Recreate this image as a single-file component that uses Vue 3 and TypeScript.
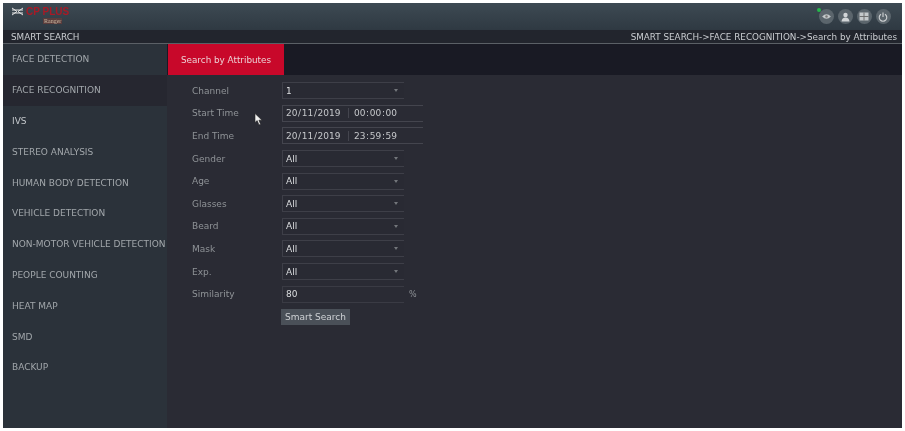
<template>
  <div class="frame">
    <header class="topbar">
      <div class="logo">
        <div class="logo-main">
          <svg class="logo-mark" width="13" height="9" viewBox="0 0 13 9">
            <path d="M1 1 L6 4.5 L1 8 M12 1 L7 4.5 L12 8 M1 3 H12 M1 6 H12" fill="none" stroke="#e4e4e4" stroke-width="1" />
          </svg>
          <span class="logo-text">CP PLUS</span>
        </div>
        <span class="logo-sub">Ranger</span>
      </div>
      <div class="top-icons">
        <span class="round-btn">
          <i class="online"></i>
          <svg width="9" height="7" viewBox="0 0 10 8"><path d="M0 4 Q5 -1 10 4 Q5 9 0 4 Z" fill="#c4c8ca" /><circle cx="5" cy="4" r="1.4" fill="#777" /></svg>
        </span>
        <span class="round-btn">
          <svg width="9" height="10" viewBox="0 0 9 10"><circle cx="4.5" cy="3" r="2.2" fill="#d2d5d7" /><path d="M0.5 9.5 Q1 5.5 4.5 5.5 Q8 5.5 8.5 9.5 Z" fill="#d2d5d7" /></svg>
        </span>
        <span class="round-btn">
          <svg width="10" height="9" viewBox="0 0 10 9"><rect x="0.5" y="0.5" width="9" height="8" fill="#c4c8ca" /><path d="M5 0.5 V8.5 M0.5 4.5 H9.5" stroke="#666" stroke-width="0.9" /></svg>
        </span>
        <span class="round-btn">
          <svg width="10" height="10" viewBox="0 0 10 10"><path d="M3 2.2 A3.8 3.8 0 1 0 7 2.2 M5 0.6 V5" fill="none" stroke="#d2d5d7" stroke-width="1.1" /></svg>
        </span>
      </div>
    </header>

    <div class="crumbs">
      <span>SMART SEARCH</span>
      <span>SMART SEARCH-&gt;FACE RECOGNITION-&gt;Search by Attributes</span>
    </div>

    <div class="body">
      <nav class="sidebar">
        <div v-for="item in menu" :key="item" class="menu-item" :class="{ active: item === 'FACE RECOGNITION', bright: item === 'IVS' }">
          {{ item }}
        </div>
      </nav>

      <main class="content">
        <div class="tabs">
          <div class="tab">Search by Attributes</div>
        </div>

        <div class="form">
          <template v-for="row in rows" :key="row.label">
            <label class="label">{{ row.label }}</label>
            <div v-if="row.kind === 'select'" class="select">
              <span>{{ row.value }}</span>
              <i class="caret"></i>
            </div>
            <div v-else-if="row.kind === 'time'" class="time-box">
              <span class="date">{{ row.value }}</span>
              <span class="time">{{ row.time }}</span>
            </div>
            <div v-else class="number-row">
              <div class="number">{{ row.value }}</div>
              <span class="unit">%</span>
            </div>
          </template>
          <span></span>
          <div><button class="search-btn" type="button">Smart Search</button></div>
        </div>

        <svg class="cursor" width="9" height="13" viewBox="0 0 9 13">
          <path d="M1 0.5 L1 9.5 L3.2 7.6 L5 12 L6.6 11.2 L4.9 7.2 L8 7.2 Z" fill="#f2f2f2" stroke="#222" stroke-width="0.6" />
        </svg>
      </main>
    </div>
  </div>
</template>

<script setup lang="ts">
interface Row {
  label: string
  kind: 'select' | 'time' | 'number'
  value: string
  time?: string
}

const menu: string[] = [
  'FACE DETECTION',
  'FACE RECOGNITION',
  'IVS',
  'STEREO ANALYSIS',
  'HUMAN BODY DETECTION',
  'VEHICLE DETECTION',
  'NON-MOTOR VEHICLE DETECTION',
  'PEOPLE COUNTING',
  'HEAT MAP',
  'SMD',
  'BACKUP',
]

const rows: Row[] = [
  { label: 'Channel', kind: 'select', value: '1' },
  { label: 'Start Time', kind: 'time', value: '20 / 11 / 2019', time: '00 : 00 : 00' },
  { label: 'End Time', kind: 'time', value: '20 / 11 / 2019', time: '23 : 59 : 59' },
  { label: 'Gender', kind: 'select', value: 'All' },
  { label: 'Age', kind: 'select', value: 'All' },
  { label: 'Glasses', kind: 'select', value: 'All' },
  { label: 'Beard', kind: 'select', value: 'All' },
  { label: 'Mask', kind: 'select', value: 'All' },
  { label: 'Exp.', kind: 'select', value: 'All' },
  { label: 'Similarity', kind: 'number', value: '80' },
]
</script>

<style>
html,
body {
  margin: 0;
  background: #fff;
}
</style>

<style scoped>
.frame {
  width: 899px;
  height: 425px;
  margin: 3px 0 0 3px;
  display: flex;
  flex-direction: column;
  overflow: hidden;
  background: #262730;
  font-family: "DejaVu Sans", sans-serif;
  font-size: 9px;
  color: #a9adb1;
  filter: blur(0.5px);
}

.topbar {
  height: 27px;
  flex: none;
  display: flex;
  justify-content: space-between;
  align-items: center;
  padding: 0 11.5px 0 8px;
  background: linear-gradient(#3d4a53, #2f3942);
}

.logo {
  display: flex;
  flex-direction: column;
  align-items: flex-start;
  padding-bottom: 3px;
}

.logo-main {
  display: flex;
  align-items: center;
  gap: 2px;
  height: 11px;
}

.logo-text {
  font-family: "Liberation Sans", sans-serif;
  font-weight: 700;
  font-size: 10px;
  line-height: 11px;
  color: #a81a26;
}

.logo-sub {
  margin: 1px 0 0 32px;
  padding: 0 1px;
  font-family: "Liberation Serif", serif;
  font-size: 6px;
  line-height: 6px;
  color: #c9b9a0;
  background: #5a3c3c;
}

.top-icons {
  display: flex;
  gap: 4px;
}

.round-btn {
  position: relative;
  width: 15px;
  height: 15px;
  border-radius: 50%;
  background: #5b656c;
  display: flex;
  align-items: center;
  justify-content: center;
}

.online {
  position: absolute;
  left: -2px;
  top: -1px;
  width: 4px;
  height: 4px;
  border-radius: 50%;
  background: #25b84a;
}

.crumbs {
  height: 13px;
  flex: none;
  display: flex;
  justify-content: space-between;
  align-items: center;
  padding: 0 5px 0 8px;
  background: #22252d;
  border-bottom: 1px solid #5b6066;
  font-size: 8.8px;
  color: #c9ccd0;
}

.body {
  flex: 1;
  min-height: 0;
  display: flex;
}

.sidebar {
  width: 164px;
  flex: none;
  background: #2b323a;
}

.menu-item {
  height: 30.8px;
  display: flex;
  align-items: center;
  padding-left: 9px;
  box-sizing: border-box;
  white-space: nowrap;
  color: #a2a7ab;
}

.menu-item.active {
  background: #262730;
}

.menu-item.bright {
  color: #c4c8cb;
}

.content {
  position: relative;
  flex: 1;
  min-width: 0;
  background: #2a2b34;
}

.tabs {
  height: 31px;
  background: #191a24;
  display: flex;
}

.tab {
  width: 116px;
  margin-left: 1px;
  display: flex;
  align-items: center;
  justify-content: center;
  background: #c8082a;
  font-size: 8.8px;
  color: #ecd0d4;
}

.form {
  display: grid;
  grid-template-columns: 90px 142px;
  grid-auto-rows: 22.6px;
  align-items: center;
  padding: 4.5px 0 0 25px;
}

.label {
  color: #8f9397;
}

.select {
  height: 17px;
  box-sizing: border-box;
  width: 122px;
  display: flex;
  align-items: center;
  justify-content: space-between;
  padding: 0 6px 0 3px;
  border-top: 1px solid #3e3f48;
  border-bottom: 1px solid #3e3f48;
  border-left: 1px solid #3e3f48;
  color: #dcdee0;
  background: #292a33;
}

.caret {
  width: 0;
  height: 0;
  border-left: 2px solid transparent;
  border-right: 2px solid transparent;
  border-top: 3px solid #73767b;
}

.time-box {
  height: 17px;
  box-sizing: border-box;
  width: 141px;
  display: flex;
  align-items: center;
  border: 1px solid #44454e;
  border-right: 0;
  color: #c6c8cb;
  word-spacing: -2.2px;
}

.date {
  width: 66px;
  padding-left: 3px;
  box-sizing: border-box;
  border-right: 1px solid #44454e;
  white-space: nowrap;
}

.time {
  padding-left: 5px;
  white-space: nowrap;
}

.number-row {
  display: flex;
  align-items: center;
  gap: 5px;
}

.number {
  width: 122px;
  height: 17px;
  box-sizing: border-box;
  padding-left: 3px;
  line-height: 15px;
  border: 1px solid #3a3b44;
  border-right: 0;
  color: #dcdee0;
}

.unit {
  font-size: 8px;
  color: #8f9397;
}

.search-btn {
  display: block;
  width: 69px;
  height: 16px;
  margin-left: -1px;
  padding: 0;
  border: 0;
  background: #4a5058;
  font: inherit;
  color: #cfd2d5;
}

.cursor {
  position: absolute;
  left: 87px;
  top: 69px;
}
</style>
